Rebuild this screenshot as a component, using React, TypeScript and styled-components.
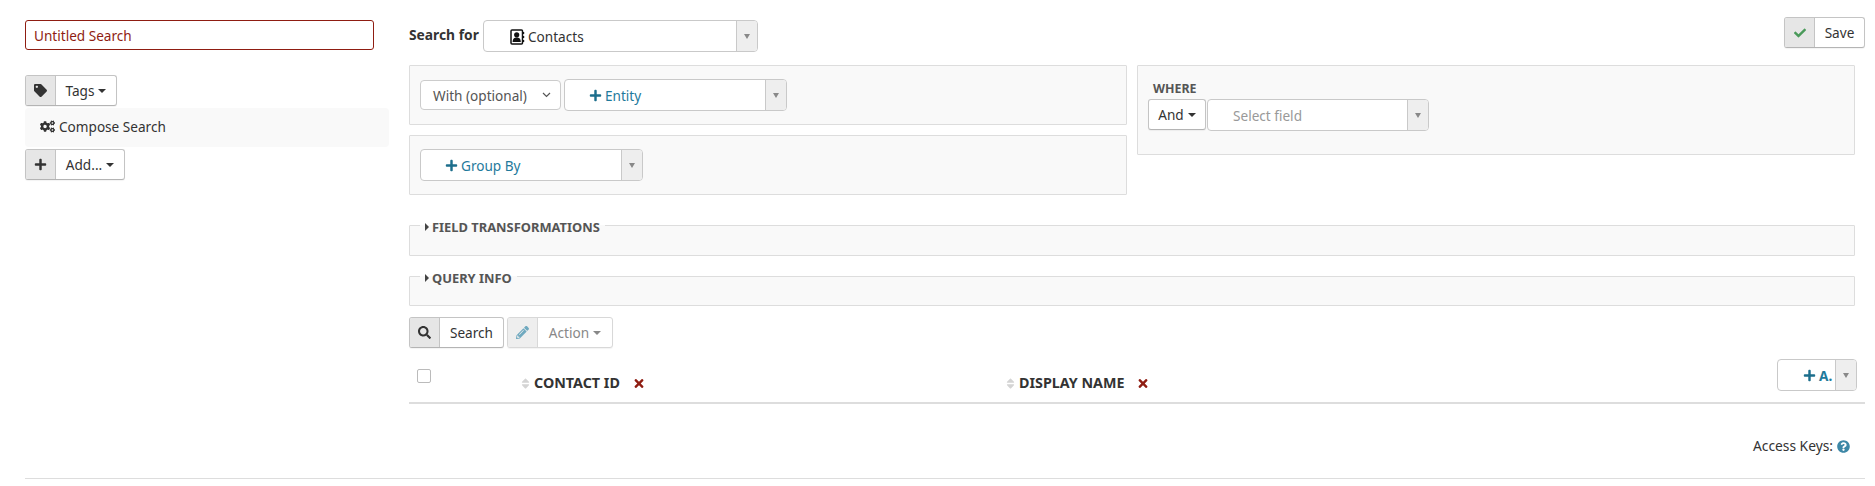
import React from "react"
import styled, { createGlobalStyle } from "styled-components"
import { FaTag, FaPlus, FaCogs, FaSearch, FaPencilAlt, FaCheck, FaTimes, FaQuestionCircle, FaSort } from "react-icons/fa"

const GlobalStyle = createGlobalStyle`
  html, body {
    margin: 0;
    padding: 0;
    background: #fff;
    font-family: "Noto Sans", "Open Sans", sans-serif;
    font-size: 13.6px;
    color: #333;
  }
  * { box-sizing: border-box; }
`

const Page = styled.div`
  width: 1875px;
  height: 486px;
  padding: 17px 10px 0 25px;
  overflow: hidden;
`

const Columns = styled.div`
  display: grid;
  grid-template-columns: 364px 1456px;
  column-gap: 20px;
  height: 450px;
`

const Sidebar = styled.aside`
  display: flex;
  flex-direction: column;
  padding-top: 3px;
`

const TitleInput = styled.div`
  width: 349px;
  height: 30px;
  padding: 0 8px;
  display: flex;
  align-items: center;
  color: #8f1d12;
  border: 1px solid #8f1d12;
  border-radius: 3px;
  margin-bottom: 25px;
`

const ButtonGroup = styled.div<{ $disabled?: boolean }>`
  display: inline-flex;
  align-self: flex-start;
  height: 31px;
  border: 1px solid ${p => (p.$disabled ? "#d8d8d8" : "#c4c4c4")};
  border-bottom-color: ${p => (p.$disabled ? "#d8d8d8" : "#b4b4b4")};
  border-radius: 3px;
  background: #fff;
  box-shadow: 0 1px 1px rgba(0, 0, 0, 0.05);
  color: ${p => (p.$disabled ? "#888" : "#333")};
`

const Addon = styled.span<{ $disabled?: boolean; $width?: number }>`
  width: ${p => p.$width ?? 30}px;
  display: flex;
  align-items: center;
  justify-content: center;
  background: ${p => (p.$disabled ? "#eee" : "#e6e6e6")};
  border-right: 1px solid ${p => (p.$disabled ? "#d8d8d8" : "#c4c4c4")};
  font-size: 13px;
  border-radius: 2px 0 0 2px;
`

const ButtonText = styled.span<{ $width: number }>`
  width: ${p => p.$width}px;
  display: flex;
  align-items: center;
  justify-content: center;
  gap: 4px;
`

const Caret = styled.span`
  width: 0;
  height: 0;
  border-left: 4px solid transparent;
  border-right: 4px solid transparent;
  border-top: 4px solid currentColor;
  margin-top: 1px;
`

const TagsBar = styled.div`
  height: 33px;
  display: flex;
`

const ComposeRow = styled.div`
  height: 39px;
  margin-bottom: 2px;
  padding: 0 0 2px 15px;
  display: flex;
  align-items: center;
  gap: 4px;
  background: #f9f9f9;
  border-radius: 4px;
  svg {
    font-size: 15px;
  }
`

const Main = styled.main`
  display: flex;
  flex-direction: column;
`

const TopBar = styled.div`
  height: 48px;
  display: flex;
  align-items: flex-start;
  justify-content: space-between;
`

const SearchFor = styled.div`
  display: flex;
  align-items: flex-start;
  padding-top: 3px;
`

const SearchForLabel = styled.label`
  width: 74px;
  line-height: 30px;
  font-size: 13.8px;
  font-weight: 700;
  color: #333;
`

const Combo = styled.div<{ $width: number; $height?: number }>`
  width: ${p => p.$width}px;
  height: ${p => p.$height ?? 32}px;
  display: flex;
  background: #fff;
  border: 1px solid #c9c9c9;
  border-radius: 4px;
`

const ComboValue = styled.div<{ $muted?: boolean; $teal?: boolean; $indent: number }>`
  flex: 1;
  min-width: 0;
  padding: 1px 0 0 ${p => p.$indent}px;
  display: flex;
  align-items: center;
  gap: 3px;
  color: ${p => (p.$muted ? "#999" : p.$teal ? "#1f7a9c" : "#333")};
  svg {
    font-size: 13px;
    color: #1c6e8c;
  }
`

const ComboArrow = styled.div`
  width: 21px;
  display: flex;
  align-items: center;
  justify-content: center;
  background: #eee;
  border-left: 1px solid #c9c9c9;
  border-radius: 0 3px 3px 0;
  &::after {
    content: "";
    border-left: 3px solid transparent;
    border-right: 3px solid transparent;
    border-top: 5px solid #888;
  }
`

const PanelGrid = styled.div`
  width: 1446px;
  display: grid;
  grid-template-columns: 718px 718px;
  column-gap: 10px;
  align-items: start;
`

const PanelStack = styled.div`
  display: flex;
  flex-direction: column;
  gap: 10px;
`

const Panel = styled.section<{ $height: number; $top: number }>`
  height: ${p => p.$height}px;
  padding: ${p => p.$top}px 10px;
  display: flex;
  align-items: flex-start;
  gap: 3px;
  background: #f9f9f9;
  border: 1px solid #ddd;
  border-radius: 1px;
`

const WherePanel = styled(Panel)`
  flex-direction: column;
  gap: 0;
`

const WhereLabel = styled.div`
  font-size: 12.4px;
  font-weight: 700;
  color: #555;
  padding-left: 5px;
  line-height: 17px;
`

const WhereRow = styled.div`
  display: flex;
  gap: 1px;
  margin-top: 2px;
`

const NativeSelect = styled.div`
  width: 141px;
  height: 30px;
  padding: 0 9px 0 12px;
  margin-top: 1px;
  display: flex;
  align-items: center;
  justify-content: space-between;
  color: #555;
  background: #fff;
  border: 1px solid #ccc;
  border-radius: 4px;
`

const Section = styled.fieldset<{ $margin: number; $height: number }>`
  width: 1446px;
  height: ${p => p.$height}px;
  margin: ${p => p.$margin}px 0 0;
  padding: 0 10px;
  min-width: 0;
  background: #f9f9f9;
  border: 1px solid #ddd;
  border-radius: 1px;
`

const SectionLegend = styled.legend`
  padding: 4px 5px 0;
  display: flex;
  align-items: center;
  gap: 3px;
  line-height: 14px;
  font-size: 12.9px;
  font-weight: 700;
  color: #555;
  &::before {
    content: "";
    border-top: 4px solid transparent;
    border-bottom: 4px solid transparent;
    border-left: 4px solid #444;
  }
`

const ActionBar = styled.div`
  display: flex;
  gap: 3px;
  margin-top: 11px;
`

const TableHead = styled.div`
  width: 1456px;
  height: 45px;
  margin-top: 11px;
  padding: 0 8px 0 8px;
  display: flex;
  align-items: flex-start;
  border-bottom: 2px solid #ddd;
`

const Check = styled.span`
  width: 14px;
  height: 14px;
  margin-top: 10px;
  border: 1.5px solid #bbb;
  border-radius: 2px;
  flex: none;
`

const HeadCell = styled.div<{ $left: number; $width: number }>`
  width: ${p => p.$width}px;
  margin-left: ${p => p.$left}px;
  height: 100%;
  padding-top: 15px;
  display: flex;
  align-items: flex-start;
  font-weight: 700;
  font-size: 14.3px;
  line-height: 18px;
  color: #333;
`

const SortIcon = styled(FaSort)`
  flex: none;
  width: 9px;
  height: 13px;
  margin: 3px 4px 0 0;
  color: #d4d4d4;
`

const RemoveIcon = styled(FaTimes)`
  flex: none;
  width: 12px;
  height: 13px;
  margin: 3px 0 0 13px;
  color: #8f1d12;
`

const AddColumn = styled.div`
  margin-left: auto;
  font-weight: 700;
`

const FootKeys = styled.div`
  width: 1441px;
  margin-top: 33px;
  display: flex;
  justify-content: flex-end;
  align-items: center;
  gap: 4px;
  line-height: 18px;
  font-size: 13.8px;
  svg {
    color: #3d87a6;
    font-size: 13px;
  }
`

const SaveGroup = styled(ButtonGroup)`
  svg {
    color: #4a9a5a;
    font-size: 12px;
  }
`

const Rule = styled.hr`
  width: 1840px;
  margin: 11px 0 0;
  height: 0;
  border: 0;
  border-top: 1px solid #ddd;
`

const ContactsIcon = () => (
  <svg width="15" height="16" viewBox="0 0 15 16" aria-hidden="true">
    <rect x="1" y="1" width="11.5" height="14" rx="1" fill="#fff" stroke="#111" strokeWidth="1.5" />
    <circle cx="6.7" cy="5.8" r="2.6" fill="#111" />
    <path d="M2.6 13c0-3.5 1.8-4.6 4.1-4.6s4.1 1.1 4.1 4.6z" fill="#111" />
    <path d="M13.6 3v2M13.6 7v2M13.6 11v2" stroke="#111" strokeWidth="1.2" />
  </svg>
)

const App: React.FC = () => {
  return (
    <Page>
      <GlobalStyle />
      <Columns>
        <Sidebar>
          <TitleInput>Untitled Search</TitleInput>
          <TagsBar>
            <ButtonGroup>
              <Addon><FaTag /></Addon>
              <ButtonText $width={60}>Tags <Caret /></ButtonText>
            </ButtonGroup>
          </TagsBar>
          <ComposeRow><FaCogs />Compose Search</ComposeRow>
          <ButtonGroup>
            <Addon><FaPlus /></Addon>
            <ButtonText $width={68}>Add... <Caret /></ButtonText>
          </ButtonGroup>
        </Sidebar>

        <Main>
          <TopBar>
            <SearchFor>
              <SearchForLabel>Search for</SearchForLabel>
              <Combo $width={275}>
                <ComboValue $indent={26}><ContactsIcon />Contacts</ComboValue>
                <ComboArrow />
              </Combo>
            </SearchFor>
            <SaveGroup>
              <Addon><FaCheck /></Addon>
              <ButtonText $width={49}>Save</ButtonText>
            </SaveGroup>
          </TopBar>

          <PanelGrid>
            <PanelStack>
              <Panel $height={60} $top={13}>
                <NativeSelect>
                  With (optional)
                  <svg width="9" height="6" viewBox="0 0 9 6"><path d="M1 1l3.5 3.5L8 1" fill="none" stroke="#555" strokeWidth="1.2" /></svg>
                </NativeSelect>
                <Combo $width={223}>
                  <ComboValue $teal $indent={24}><FaPlus />Entity</ComboValue>
                  <ComboArrow />
                </Combo>
              </Panel>
              <Panel $height={60} $top={13}>
                <Combo $width={223}>
                  <ComboValue $teal $indent={24}><FaPlus />Group By</ComboValue>
                  <ComboArrow />
                </Combo>
              </Panel>
            </PanelStack>
            <WherePanel $height={90} $top={14}>
              <WhereLabel>WHERE</WhereLabel>
              <WhereRow>
                <ButtonGroup>
                  <ButtonText $width={56}>And <Caret /></ButtonText>
                </ButtonGroup>
                <Combo $width={222}>
                  <ComboValue $muted $indent={25}>Select field</ComboValue>
                  <ComboArrow />
                </Combo>
              </WhereRow>
            </WherePanel>
          </PanelGrid>

          <Section $margin={21} $height={40}>
            <SectionLegend>FIELD TRANSFORMATIONS</SectionLegend>
          </Section>
          <Section $margin={11} $height={39}>
            <SectionLegend>QUERY INFO</SectionLegend>
          </Section>

          <ActionBar>
            <ButtonGroup>
              <Addon><FaSearch /></Addon>
              <ButtonText $width={63}>Search</ButtonText>
            </ButtonGroup>
            <ButtonGroup $disabled>
              <Addon $disabled><FaPencilAlt color="#6fa9bf" /></Addon>
              <ButtonText $width={74}>Action <Caret /></ButtonText>
            </ButtonGroup>
          </ActionBar>

          <TableHead>
            <Check />
            <HeadCell $left={90} $width={485}>
              <SortIcon />CONTACT ID<RemoveIcon />
            </HeadCell>
            <HeadCell $left={0} $width={300}>
              <SortIcon />DISPLAY NAME<RemoveIcon />
            </HeadCell>
            <AddColumn>
              <Combo $width={80}>
                <ComboValue $teal $indent={25}><FaPlus />A.</ComboValue>
                <ComboArrow />
              </Combo>
            </AddColumn>
          </TableHead>

          <FootKeys>Access Keys: <FaQuestionCircle /></FootKeys>
        </Main>
      </Columns>
      <Rule />
    </Page>
  )
}

export default App
